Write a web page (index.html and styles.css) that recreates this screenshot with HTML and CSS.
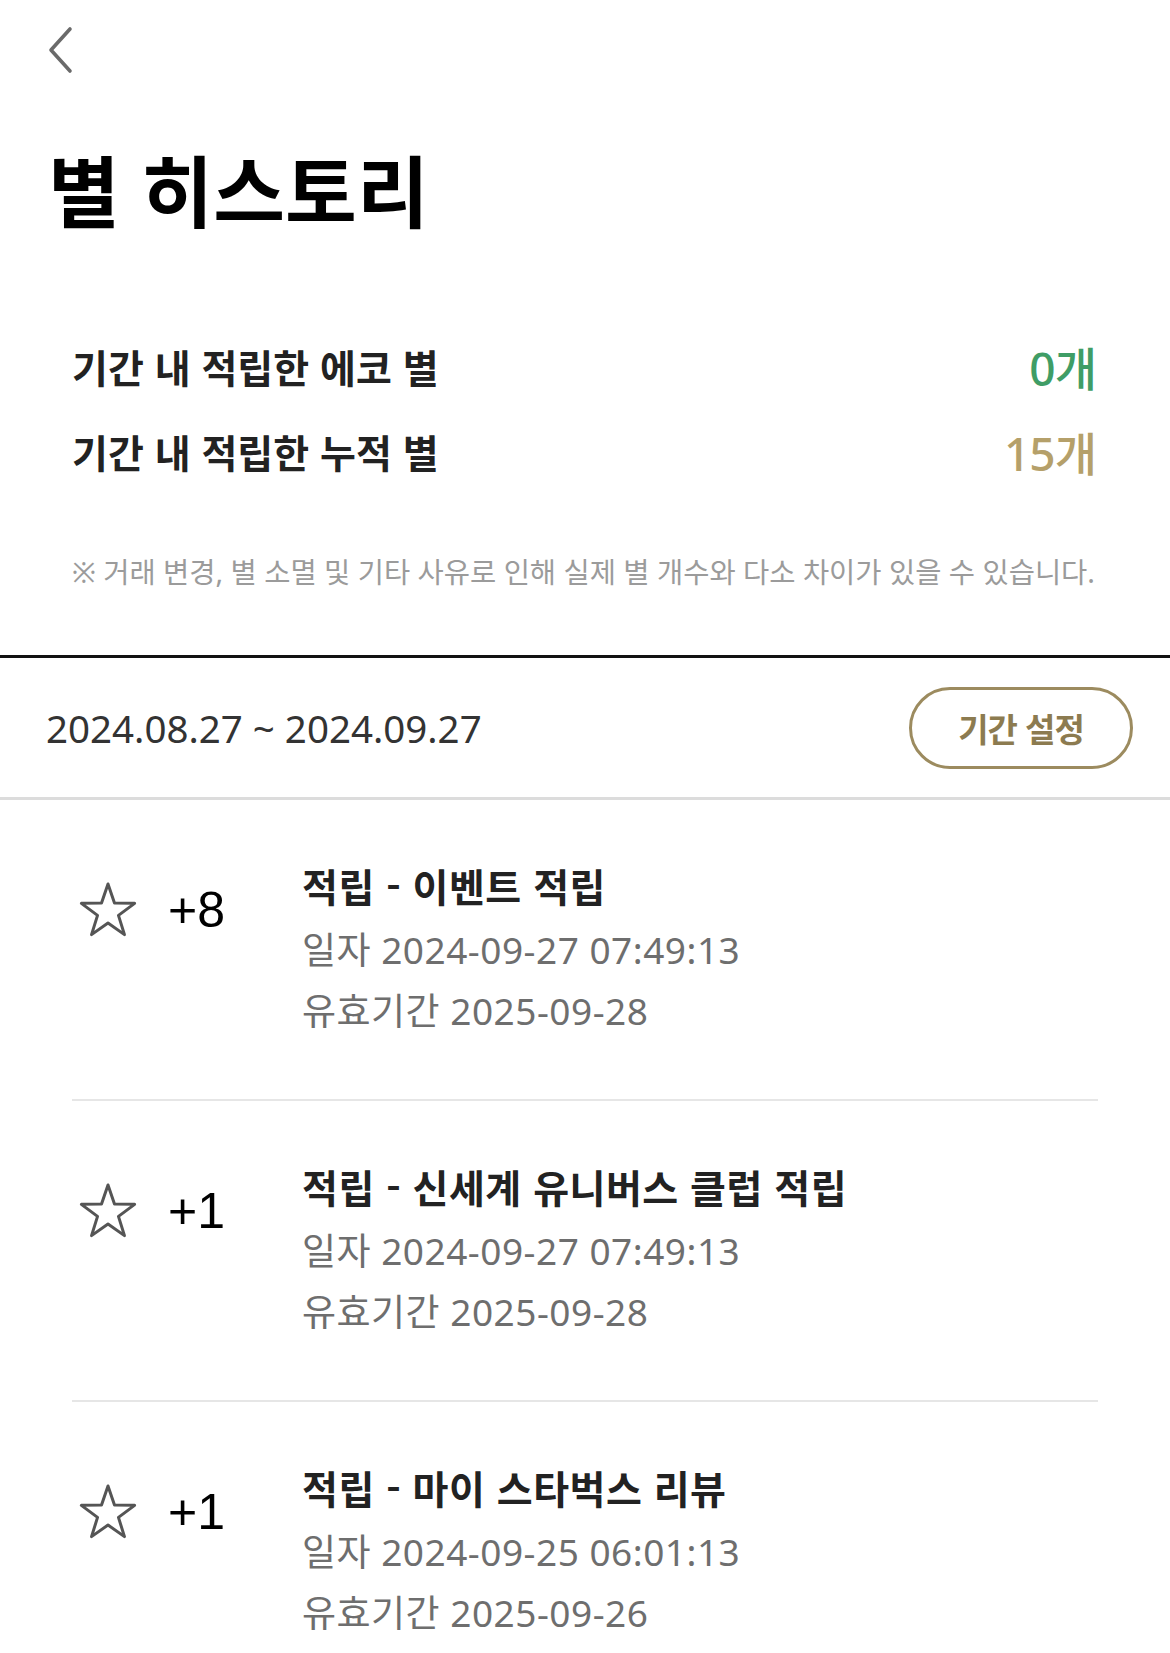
FILE: index.html
```html
<!DOCTYPE html>
<html lang="ko">
<head>
<meta charset="utf-8">
<title>별 히스토리</title>
<link rel="stylesheet" href="styles.css">
</head>
<body>
<header class="topbar">
  <button class="back" aria-label="뒤로">
    <svg width="30" height="50" viewBox="0 0 30 50"><path d="M23 4 L4 25 L23 46" fill="none" stroke="#6a6a6a" stroke-width="3.6" stroke-linecap="round" stroke-linejoin="round"/></svg>
  </button>
</header>
<h1 class="page-title">별 히스토리</h1>
<section class="summary">
  <div class="summary-row">
    <span class="summary-label">기간 내 적립한 에코 별</span>
    <span class="summary-value eco">0개</span>
  </div>
  <div class="summary-row">
    <span class="summary-label">기간 내 적립한 누적 별</span>
    <span class="summary-value total">15개</span>
  </div>
  <p class="notice">※ 거래 변경, 별 소멸 및 기타 사유로 인해 실제 별 개수와 다소 차이가 있을 수 있습니다.</p>
</section>
<div class="period-bar">
  <span class="period">2024.08.27 ~ 2024.09.27</span>
  <button class="period-btn">기간 설정</button>
</div>
<ul class="history">
  <li class="history-item">
    <div class="item-left">
      <svg class="star" width="60" height="57" viewBox="0 0 60 57"><polygon points="30,2 36.47,21.1 56.63,21.35 40.46,33.4 46.46,52.65 30,41 13.54,52.65 19.54,33.4 3.37,21.35 23.53,21.1" fill="none" stroke="#555" stroke-width="3" stroke-linejoin="round"/></svg>
      <span class="amount">+8</span>
    </div>
    <div class="item-body">
      <div class="item-title">적립 - 이벤트 적립</div>
      <div class="item-meta">일자 2024-09-27 07:49:13</div>
      <div class="item-meta">유효기간 2025-09-28</div>
    </div>
  </li>
  <li class="history-item">
    <div class="item-left">
      <svg class="star" width="60" height="57" viewBox="0 0 60 57"><polygon points="30,2 36.47,21.1 56.63,21.35 40.46,33.4 46.46,52.65 30,41 13.54,52.65 19.54,33.4 3.37,21.35 23.53,21.1" fill="none" stroke="#555" stroke-width="3" stroke-linejoin="round"/></svg>
      <span class="amount">+1</span>
    </div>
    <div class="item-body">
      <div class="item-title">적립 - 신세계 유니버스 클럽 적립</div>
      <div class="item-meta">일자 2024-09-27 07:49:13</div>
      <div class="item-meta">유효기간 2025-09-28</div>
    </div>
  </li>
  <li class="history-item">
    <div class="item-left">
      <svg class="star" width="60" height="57" viewBox="0 0 60 57"><polygon points="30,2 36.47,21.1 56.63,21.35 40.46,33.4 46.46,52.65 30,41 13.54,52.65 19.54,33.4 3.37,21.35 23.53,21.1" fill="none" stroke="#555" stroke-width="3" stroke-linejoin="round"/></svg>
      <span class="amount">+1</span>
    </div>
    <div class="item-body">
      <div class="item-title">적립 - 마이 스타벅스 리뷰</div>
      <div class="item-meta">일자 2024-09-25 06:01:13</div>
      <div class="item-meta">유효기간 2025-09-26</div>
    </div>
  </li>
</ul>
</body>
</html>
```
FILE: styles.css
```css
* { box-sizing: border-box; }
html, body { margin: 0; padding: 0; background: #fff; }
body {
  font-family: "Noto Sans", "Noto Sans CJK KR", sans-serif;
  color: #222;
}
.topbar {
  height: 143px;
  padding: 25px 0 0 47px;
}
.back {
  display: block;
  padding: 0;
  margin: 0;
  border: 0;
  background: none;
}
.back svg { display: block; }
.page-title {
  margin: 0;
  padding-left: 48px;
  font-family: "Noto Sans CJK KR", sans-serif;
  font-size: 78px;
  line-height: 91px;
  font-weight: 700;
  letter-spacing: 0;
  color: #000;
}
.summary {
  padding: 89px 74px 63px 72px;
}
.summary-row {
  display: flex;
  justify-content: space-between;
  align-items: center;
  height: 85px;
}
.summary-label {
  font-family: "Noto Sans CJK KR", sans-serif;
  font-size: 39px;
  font-weight: 700;
  color: #222;
}
.summary-value {
  font-size: 46px;
  font-weight: 500;
  letter-spacing: -1px;
}
.summary-value.eco { color: #3f9d66; }
.summary-value.total { color: #b5a06a; }
.notice {
  margin: 59px 0 0;
  font-size: 28.5px;
  line-height: 40px;
  color: #9b9b9b;
  white-space: nowrap;
}
.period-bar {
  display: flex;
  justify-content: space-between;
  align-items: center;
  height: 145px;
  padding: 0 37px 0 46px;
  border-top: 3px solid #111;
  border-bottom: 3px solid #dcdcdc;
}
.period {
  font-size: 38.5px;
  color: #333;
}
.period-btn {
  width: 224px;
  height: 82px;
  border: 3px solid #9c8b5f;
  border-radius: 41px;
  background: #fff;
  font-family: "Noto Sans CJK KR", sans-serif;
  font-size: 33px;
  font-weight: 700;
  letter-spacing: -1px;
  color: #8c7b50;
  padding: 0;
}
.history {
  list-style: none;
  margin: 0;
  padding: 0 72px;
}
.history-item {
  display: flex;
  padding: 51px 0 58px;
  border-bottom: 2px solid #e6e6e6;
}
.item-left {
  width: 230px;
  height: 60px;
  margin-top: 29px;
  display: flex;
  align-items: center;
  padding-left: 6px;
}
.star { display: block; flex: none; }
.amount {
  margin-left: 30px;
  font-family: "Liberation Sans", sans-serif;
  font-size: 50px;
  color: #000;
}
.item-body {
  display: flex;
  flex-direction: column;
}
.item-title {
  font-family: "Noto Sans CJK KR", sans-serif;
  font-size: 39px;
  line-height: 68px;
  font-weight: 700;
  letter-spacing: 0.5px;
  color: #222;
}
.item-meta {
  font-size: 37px;
  line-height: 61px;
  color: #6e6e6e;
  letter-spacing: 0.5px;
}
```
